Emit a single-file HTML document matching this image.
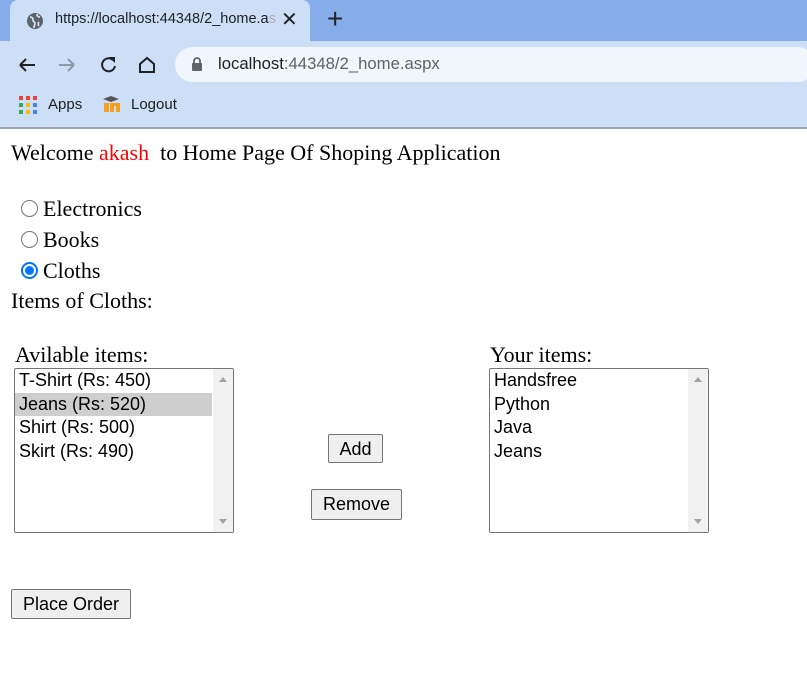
<!DOCTYPE html>
<html><head><style>
*{margin:0;padding:0;box-sizing:border-box}
body{width:807px;height:677px;position:relative;background:#fff;overflow:hidden;font-family:"Liberation Serif",serif;}
.abs{position:absolute}
.ui{font-family:"Liberation Sans",sans-serif}
.t{font-size:22px;color:#000;white-space:nowrap}
.lb{border:1px solid #767676;border-radius:2px;background:#fff;}
.lb .it{font-family:"Liberation Sans",sans-serif;font-size:18px;height:23.5px;line-height:23px;padding-left:4px;white-space:nowrap}
.sb{position:absolute;right:0;top:0;bottom:0;width:20px;background:#f1f1f1}
.btn{position:absolute;border:1px solid #767676;border-radius:2px;background:#efefef;font-family:"Liberation Sans",sans-serif;font-size:18px;text-align:center;line-height:28px}
.radio{position:absolute;width:17px;height:17px;border:1px solid #767676;border-radius:50%;background:#fff}
</style></head><body>
<div class="abs" style="left:0;top:0;width:807px;height:41px;background:#86acea"></div>
<div class="abs" style="left:10px;top:0;width:300px;height:42px;background:#cddff7;border-radius:8px 8px 0 0"></div>
<div class="abs" style="left:0;top:41px;width:807px;height:86px;background:#cddff7"></div>
<div class="abs" style="left:0;top:127px;width:807px;height:2px;background:#9aa3b1"></div>
<svg class="abs" style="left:26px;top:12px" width="18" height="18" viewBox="0 0 18 18"><circle cx="9" cy="9" r="8" fill="#5f6368"/><path d="M4 5c2 0 3 1 3 3s2 2 2 3-1 3-1 5M11 2c0 2 1 3 3 3M13 10c-1 1-1 3 0 4" stroke="#cddff7" stroke-width="1.8" fill="none"/></svg>
<div class="abs ui" style="left:55px;top:11px;font-size:14.5px;color:#202124;white-space:nowrap;width:222px;overflow:hidden">https://localhost:44348/2_home.a<span style="color:#aab">s</span></div>
<div class="abs ui" style="left:281px;top:7px;font-size:20px;color:#222">✕</div>
<div class="abs ui" style="left:327px;top:3px;font-size:28px;color:#222">+</div>
<svg class="abs" style="left:16px;top:54px" width="120" height="22" viewBox="0 0 120 22">
<path d="M4 11h15M4 11l6-6M4 11l6 6" stroke="#202124" stroke-width="2" fill="none"/>
<path d="M43 11h15M58 11l-6-6M58 11l-6 6" stroke="#8e97a3" stroke-width="2" fill="none"/>
<path d="M97 6a6.5 6.5 0 1 0 2 6" stroke="#202124" stroke-width="2" fill="none"/><path d="M93 3h6v6z" fill="#202124"/>
</svg>
<svg class="abs" style="left:137px;top:55px" width="20" height="20" viewBox="0 0 20 20"><path d="M3 9L10 3l7 6v8H3z" stroke="#202124" stroke-width="2" fill="none"/></svg>
<div class="abs" style="left:175px;top:47px;width:640px;height:35px;background:#f1f5fc;border-radius:18px"></div>
<svg class="abs" style="left:191px;top:57px" width="12" height="15" viewBox="0 0 12 15"><rect x="1" y="6" width="10" height="8" rx="1" fill="#5f6368"/><path d="M3 6V4a3 3 0 0 1 6 0v2" stroke="#5f6368" stroke-width="1.8" fill="none"/></svg>
<div class="abs ui" style="left:218px;top:54px;font-size:16.7px;color:#202124">localhost<span style="color:#5f6368">:44348/2_home.aspx</span></div>
<svg class="abs" style="left:19px;top:96px" width="18" height="18" viewBox="0 0 18 18">
<rect x="0" y="0" width="4" height="4" fill="#ea4335"/><rect x="7" y="0" width="4" height="4" fill="#ea4335"/><rect x="14" y="0" width="4" height="4" fill="#ea4335"/>
<rect x="0" y="7" width="4" height="4" fill="#34a853"/><rect x="7" y="7" width="4" height="4" fill="#fbbc05"/><rect x="14" y="7" width="4" height="4" fill="#4285f4"/>
<rect x="0" y="14" width="4" height="4" fill="#34a853"/><rect x="7" y="14" width="4" height="4" fill="#fbbc05"/><rect x="14" y="14" width="4" height="4" fill="#4285f4"/></svg>
<div class="abs ui" style="left:48px;top:96px;font-size:15px;color:#202124">Apps</div>
<svg class="abs" style="left:101px;top:95px" width="22" height="18" viewBox="0 0 22 18"><path d="M2 4l8-3 8 3-8 3z" fill="#555"/><path d="M3 8h5v9H3zM9 8h10v9h-4v-6h-2v6H9z" fill="#f5a01a"/></svg>
<div class="abs ui" style="left:131px;top:96px;font-size:15px;color:#202124">Logout</div>

<div class="abs t" style="left:11px;top:140px">Welcome <span style="color:#f00">akash</span>&nbsp; to Home Page Of Shoping Application</div>
<div class="radio" style="left:21px;top:200px"></div><div class="abs t" style="left:43px;top:196px">Electronics</div>
<div class="radio" style="left:21px;top:231px"></div><div class="abs t" style="left:43px;top:227px">Books</div>
<div class="radio" style="left:21px;top:262px;border:2px solid #0075ff"><div style="position:absolute;left:2px;top:2px;width:9px;height:9px;border-radius:50%;background:#0075ff"></div></div><div class="abs t" style="left:43px;top:258px">Cloths</div>
<div class="abs t" style="left:11px;top:288px">Items of Cloths:</div>
<div class="abs t" style="left:15px;top:342px">Avilable items:</div>
<div class="abs t" style="left:490px;top:342px">Your items:</div>
<div class="abs lb" style="left:14px;top:368px;width:220px;height:165px">
<div class="sb"><div style="position:absolute;left:6px;top:8px;border:4px solid transparent;border-bottom:5px solid #a3a3a3;border-top:0"></div><div style="position:absolute;left:6px;bottom:8px;border:4px solid transparent;border-top:5px solid #a3a3a3;border-bottom:0"></div></div>
<div class="it">T-Shirt (Rs: 450)</div><div class="it" style="background:#cecece;margin-right:21px">Jeans (Rs: 520)</div><div class="it">Shirt (Rs: 500)</div><div class="it">Skirt (Rs: 490)</div>
</div>
<div class="abs lb" style="left:489px;top:368px;width:220px;height:165px">
<div class="sb"><div style="position:absolute;left:6px;top:8px;border:4px solid transparent;border-bottom:5px solid #a3a3a3;border-top:0"></div><div style="position:absolute;left:6px;bottom:8px;border:4px solid transparent;border-top:5px solid #a3a3a3;border-bottom:0"></div></div>
<div class="it">Handsfree</div><div class="it">Python</div><div class="it">Java</div><div class="it">Jeans</div>
</div>
<div class="btn" style="left:328px;top:434px;width:55px;height:29px">Add</div>
<div class="btn" style="left:311px;top:489px;width:91px;height:31px;line-height:29px">Remove</div>
<div class="btn" style="left:11px;top:589px;width:120px;height:30px">Place Order</div>
</body></html>
